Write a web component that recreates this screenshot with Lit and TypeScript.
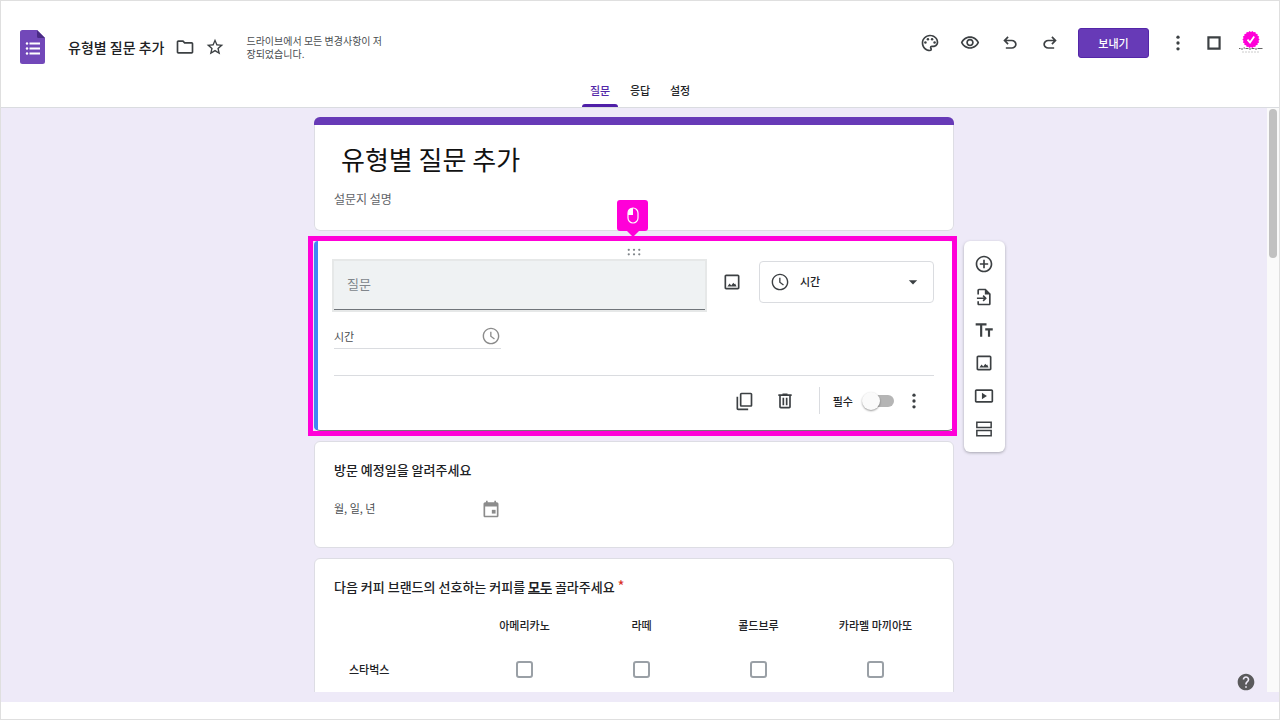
import { LitElement, html, css, svg } from "lit";
import { customElement, property, state } from "lit/decorators.js";

const icons: Record<string, unknown> = {
  folder: svg`<path d="M9.17 6l2 2H20v10H4V6h5.17M10 4H4c-1.1 0-2 .9-2 2v12c0 1.1.9 2 2 2h16c1.1 0 2-.9 2-2V8c0-1.1-.9-2-2-2h-8l-2-2z"/>`,
  star: svg`<path d="M22 9.24l-7.19-.62L12 2 9.19 8.63 2 9.24l5.46 4.73L5.82 21 12 17.27 18.18 21l-1.63-7.03L22 9.24zM12 15.4l-3.76 2.27 1-4.28-3.32-2.88 4.38-.38L12 6.1l1.71 4.04 4.38.38-3.32 2.88 1 4.28L12 15.4z"/>`,
  palette: svg`<path d="M12 22C6.49 22 2 17.51 2 12S6.49 2 12 2s10 4.04 10 9c0 3.31-2.69 6-6 6h-1.77c-.28 0-.5.22-.5.5 0 .12.05.23.13.33.41.47.64 1.06.64 1.67A2.5 2.5 0 0 1 12 22zm0-18c-4.41 0-8 3.59-8 8s3.59 8 8 8c.28 0 .5-.22.5-.5a.54.54 0 0 0-.14-.35c-.41-.46-.63-1.05-.63-1.65a2.5 2.5 0 0 1 2.5-2.5H16c2.21 0 4-1.79 4-4 0-3.86-3.59-7-8-7z"/><circle cx="6.5" cy="11.5" r="1.5"/><circle cx="9.5" cy="7.5" r="1.5"/><circle cx="14.5" cy="7.5" r="1.5"/><circle cx="17.5" cy="11.5" r="1.5"/>`,
  eye: svg`<path d="M12 6c3.79 0 7.17 2.13 8.82 5.5C19.17 14.87 15.79 17 12 17s-7.17-2.13-8.82-5.5C4.83 8.13 8.21 6 12 6m0-2C7 4 2.73 7.11 1 11.5 2.73 15.89 7 19 12 19s9.27-3.11 11-7.5C21.27 7.11 17 4 12 4zm0 5a2.5 2.5 0 0 1 0 5 2.5 2.5 0 0 1 0-5m0-2c-2.48 0-4.5 2.02-4.5 4.5S9.52 16 12 16s4.5-2.02 4.5-4.5S14.48 7 12 7z"/>`,
  undo: svg`<path d="M7 19v-2h7.1c1.05 0 1.96-.33 2.74-1s1.16-1.5 1.16-2.5-.39-1.83-1.16-2.5S15.150 10 14.100 10H7.800l2.600 2.600L9 14 4 9l5-5 1.400 1.400L7.800 8h6.300c1.617 0 3.004.525 4.162 1.575C19.421 10.625 20 11.933 20 13.500s-.579 2.875-1.738 3.925C17.104 18.475 15.717 19 14.100 19H7z"/>`,
  redo: svg`<path transform="matrix(-1 0 0 1 24 0)" d="M7 19v-2h7.1c1.05 0 1.96-.33 2.74-1s1.16-1.5 1.16-2.5-.39-1.83-1.16-2.5S15.150 10 14.100 10H7.800l2.600 2.600L9 14 4 9l5-5 1.400 1.400L7.800 8h6.300c1.617 0 3.004.525 4.162 1.575C19.421 10.625 20 11.933 20 13.500s-.579 2.875-1.738 3.925C17.104 18.475 15.717 19 14.100 19H7z"/>`,
  more: svg`<circle cx="12" cy="5" r="2"/><circle cx="12" cy="12" r="2"/><circle cx="12" cy="19" r="2"/>`,
  square: svg`<path fill-rule="evenodd" d="M4 4h16v16H4zM6.600 6.600v10.800h10.800V6.600z"/>`,
  image: svg`<path d="M19 5v14H5V5h14m0-2H5c-1.100 0-2 .9-2 2v14c0 1.100.9 2 2 2h14c1.100 0 2-.9 2-2V5c0-1.100-.9-2-2-2z"/><path d="M6.500 17.500l2.600-3.600 2 2.400 2.500-3.300 1.300 1.700.8-.8 1.800 3.600z"/>`,
  clock: svg`<path d="M11.990 2C6.470 2 2 6.480 2 12s4.470 10 9.990 10C17.520 22 22 17.520 22 12S17.520 2 11.990 2zM12 20.300c-4.600 0-8.300-3.700-8.300-8.300S7.400 3.700 12 3.700s8.300 3.700 8.300 8.300-3.700 8.300-8.300 8.300z"/><path d="M12.600 7H11v5.700l4.700 3.600.95-1.300-4.050-3.050z"/>`,
  caret: svg`<path d="M7 10l5 5 5-5z"/>`,
  copy: svg`<path d="M20 2H9c-1.100 0-2 .9-2 2v13c0 1.100.9 2 2 2h11c1.100 0 2-.9 2-2V4c0-1.100-.9-2-2-2zm0 15H9V4h11v13zM3 7v14c0 1.100.9 2 2 2h12v-2H5V7H3z"/>`,
  trash: svg`<path d="M15 4V3H9v1H4v2h1v13c0 1.100.9 2 2 2h10c1.100 0 2-.9 2-2V6h1V4h-5zm2 15H7V6h10v13z"/><path d="M9 8h2v9H9zM13 8h2v9h-2z"/>`,
  calendar: svg`<path d="M19 4h-1V2h-2v2H8V2H6v2H5c-1.110 0-2 .9-2 2v14c0 1.100.89 2 2 2h14c1.100 0 2-.9 2-2V6c0-1.100-.9-2-2-2zm0 16H5V9h14v11z"/><path d="M13 13h4.500v4.500H13z"/>`,
  add: svg`<path d="M13 7h-2v4H7v2h4v4h2v-4h4v-2h-4V7zm-1-5C6.480 2 2 6.480 2 12s4.480 10 10 10 10-4.480 10-10S17.520 2 12 2zm0 18c-4.410 0-8-3.590-8-8s3.590-8 8-8 8 3.590 8 8-3.590 8-8 8z"/>`,
  importFile: svg`<path fill-rule="evenodd" d="M14 2H6c-1.100 0-2 .9-2 2v5h2V4h7v5h5v11H6v-3H4v3c0 1.100.9 2 2 2h12c1.100 0 2-.9 2-2V8l-6-6z"/><path d="M11.600 9.700l-1.300 1.300 1.400 1.500H3.500v2h8.200l-1.400 1.500 1.300 1.300 3.800-3.800z"/>`,
  title: svg`<path d="M2 4v2.500h5.300V20h2.600V6.500H15V4H2zm20.500 6h-9v2.500h3.200V20h2.600v-7.500h3.200V10z"/>`,
  video: svg`<path d="M9.500 8v8l6-4-6-4z"/><path d="M21 4H3c-1.100 0-2 .9-2 2v12c0 1.100.9 2 2 2h18c1.100 0 2-.9 2-2V6c0-1.100-.9-2-2-2zm0 14H3V6h18v12z"/>`,
  section: svg`<path fill-rule="evenodd" d="M2.500 3h19v8h-19zM4.300 4.800v4.400h15.400V4.800zM2.500 13h19v8h-19zM4.300 14.800v4.400h15.400v-4.400z"/>`,
  drag: svg`<circle cx="5" cy="9" r="1.500"/><circle cx="12" cy="9" r="1.500"/><circle cx="19" cy="9" r="1.500"/><circle cx="5" cy="15" r="1.500"/><circle cx="12" cy="15" r="1.500"/><circle cx="19" cy="15" r="1.500"/>`,
  help: svg`<path d="M12 2C6.480 2 2 6.480 2 12s4.480 10 10 10 10-4.480 10-10S17.520 2 12 2zm1 17h-2v-2h2v2zm2.070-7.750l-.9.920C13.450 12.900 13 13.500 13 15h-2v-.5c0-1.100.45-2.100 1.170-2.830l1.240-1.260c.37-.36.59-.86.59-1.410 0-1.100-.9-2-2-2s-2 .9-2 2H8c0-2.210 1.790-4 4-4s4 1.790 4 4c0 .88-.36 1.680-.93 2.250z"/>`,
};

@customElement("gf-icon")
class GfIcon extends LitElement {
  static styles = css`
    :host { display: inline-flex; flex: none; width: 20px; height: 20px; }
    svg { width: 100%; height: 100%; fill: currentColor; }
  `;
  @property() name = "";
  render() {
    return html`<svg viewBox="0 0 24 24" aria-hidden="true">${icons[this.name]}</svg>`;
  }
}

@customElement("app-root")
class AppRoot extends LitElement {
  static styles = css`
    :host {
      display: flex; flex-direction: column; position: relative;
      box-sizing: border-box; height: 100vh; padding-bottom: 17px;
      border: 1px solid #dfdfdf; background: #fff; color: #202124;
      font-family: "Noto Sans CJK KR", "Noto Sans", sans-serif;
      font-size: 12px; line-height: 20px;
    }
    * { box-sizing: border-box; }
    button, input, select { font: inherit; color: inherit; margin: 0; }
    h1, h2, p { margin: 0; font-weight: 400; }
    .icon-btn {
      display: inline-flex; align-items: center; justify-content: center; flex: none;
      min-width: 20px; height: 20px; padding: 0; border: 0; background: none;
      color: #3c4043; cursor: pointer;
    }

    .header { flex: none; border-bottom: 1px solid #dadce0; }
    .bar { display: flex; justify-content: space-between; align-items: flex-start; padding: 27px 15px 0 19px; }
    .file { display: flex; align-items: center; padding-top: 2px; }
    .logo { width: 25px; height: 34px; flex: none; }
    .file-name { margin: 0 11px 0 23px; padding-bottom: 1px; font-size: 14px; font-weight: 500; white-space: nowrap; }
    .file-actions { display: flex; gap: 10px; }
    .saved { width: 136px; margin-left: 21px; font-size: 10px; line-height: 13px; color: #4a4d51; }
    .actions { display: flex; align-items: center; height: 30px; }
    .tools { display: flex; gap: 8px; margin-right: 12px; }
    .tools .icon-btn { width: 32px; }
    .account { display: flex; align-items: center; gap: 12px; margin-left: 17px; }
    .account .icon-btn { width: 24px; }
    .send {
      height: 30px; padding: 0 19px 1px; min-width: 71px; border: 1px solid #5326a8; border-radius: 3px;
      background: #673ab7; color: #fff; font-size: 11px; font-weight: 500; line-height: 20px;
    }
    .avatar { width: 26px; height: 26px; flex: none; }
    .tabs { display: flex; justify-content: center; gap: 4px; margin-top: 12px; }
    .tab {
      display: flex; align-items: center; width: 36px; height: 31px; padding: 0 0 3px; justify-content: center;
      border: 0; background: none; font-size: 11px; font-weight: 500; line-height: 20px; position: relative;
    }
    .tab.active { color: #5227a8; }
    .tab.active::after {
      content: ""; position: absolute; left: 0; right: 0; bottom: 0; height: 3px;
      border-radius: 3px 3px 0 0; background: #4f1fa8;
    }

    .workspace { flex: 1; min-height: 0; display: flex; background: #eeeaf8; border-bottom: 10px solid #eeeaf8; }
    .scroller { flex: 1; min-width: 0; overflow: hidden auto; scrollbar-width: none; padding-top: 9px; }
    .track { flex: none; width: 12px; padding: 1px 2px; background: #fafafa; }
    .thumb { height: 149px; border-radius: 4px; background: #c1c1c1; }
    .form { display: flex; flex-direction: column; gap: 10px; max-width: 640px; margin: 0 auto; }
    .card { position: relative; padding: 18px 19px; border: 1px solid #dddde4; border-radius: 6px; background: #fff; }

    .intro { padding: 0 19px 22px; border: 0; box-shadow: inset 0 0 0 1px #dddde4; overflow: hidden; }
    .intro::before { content: ""; display: block; height: 8px; margin: 0 -19px 14px; background: #673ab7; }
    .intro h1 { padding: 0 8px; font-size: 26px; line-height: 40px; color: #111; }
    .intro p { margin-top: 9px; padding-left: 1px; line-height: 21px; color: #5f6368; }

    .editor { padding: 0 20px 16px; border: 0; border-bottom: 1px solid #777; }
    .editor::before {
      content: ""; position: absolute; left: 0; top: 0; bottom: 0; width: 4px;
      border-radius: 6px 0 0 6px; background: #4285f4;
    }
    .drag { display: flex; justify-content: center; height: 20px; align-items: center; padding-top: 2px; color: #80868b; }
    .drag gf-icon { width: 18px; height: 18px; }
    .ask { display: flex; align-items: flex-start; gap: 17px; }
    .question {
      flex: 1; min-width: 0; height: 49px; padding: 0 13px 3px; border: 0; border-bottom: 1px solid #70757a; border-radius: 0;
      background: #eff2f3; box-shadow: 0 0 0 2px #e6e8e8; font-size: 13px;
    }
    .question::placeholder { color: #80868b; opacity: 1; }
    .ask .icon-btn { margin-top: 11px; }
    .kind {
      position: relative; display: flex; align-items: center; width: 175px; height: 42px; padding-left: 10px;
      border: 1px solid #dadce0; border-radius: 4px; color: #3c4043;
    }
    .kind select {
      position: absolute; inset: 0; width: 100%; height: 100%; padding: 0 30px 2px 40px; border: 0;
      background: none; appearance: none; color: #202124; font-weight: 500; font-size: 11px;
    }
    .kind .caret { margin-left: auto; margin-right: 10px; }
    .answer { display: flex; align-items: center; width: 167px; color: #4a4d51; font-size: 11px; }
    .answer input { flex: 1; min-width: 0; height: 20px; padding: 0 0 1px; border: 0; background: none; }
    .answer input::placeholder { color: #4a4d51; opacity: 1; }
    .answer gf-icon { color: #8c8c8c; }
    .time { height: 25px; margin-top: 14px; border-bottom: 1px solid #dadce0; }
    .footer { display: flex; align-items: center; justify-content: flex-end; margin-top: 26px; padding: 11px 10px 0 0; border-top: 1px solid #dadce0; }
    .pair { display: flex; gap: 21px; }
    .rule { width: 1px; height: 27px; margin: 0 13px 0 24px; background: #dadce0; }
    .required { display: flex; align-items: center; gap: 11px; margin-right: 10px; font-size: 11px; font-weight: 500; }
    .switch { appearance: none; position: relative; width: 30px; height: 12px; border-radius: 6px; background: #b5b5b5; }
    .switch::before {
      content: ""; position: absolute; left: -2px; top: -3px; width: 18px; height: 18px; border-radius: 50%;
      background: #fafafa; box-shadow: 0 1px 2px rgba(0, 0, 0, 0.4);
    }
    .switch:checked::before { left: 14px; background: #673ab7; }
    .outline { position: absolute; inset: -5px -3px -6px -6px; border: 5px solid #ff00d8; pointer-events: none; }
    .badge {
      position: absolute; left: 303px; top: -41px; width: 31px; height: 31px; border-radius: 3px; background: #ff00d8;
      display: flex; align-items: center; justify-content: center;
    }
    .badge::after {
      content: ""; position: absolute; top: 100%; left: 50%; margin-left: -6px;
      border: 6px solid transparent; border-top-color: #ff00d8; border-bottom: 0;
    }
    .badge svg { width: 12px; height: 17px; }
    .side {
      position: absolute; left: calc(100% + 10px); top: 0; display: flex; flex-direction: column; gap: 13px;
      padding: 13px 11px 13px 10px; border-radius: 6px; background: #fff; box-shadow: 0 1px 3px rgba(60, 64, 67, 0.4);
    }

    .card h2 { font-size: 13px; font-weight: 500; color: #202124; }
    .card h2 u { font-weight: 700; }
    .date { height: 21px; margin: 18px 0 10px; }
    .star { color: #d93025; font-size: 15px; line-height: 16px; font-weight: 400; }
    .grid { width: 100%; margin-top: 8px; border-collapse: collapse; table-layout: fixed; font-size: 11px; color: #202124; }
    .grid th, .grid td { padding: 0; font-weight: 500; text-align: center; }
    .grid thead th { height: 40px; }
    .grid tbody tr { height: 48px; }
    .grid th:first-child { width: 22%; padding-left: 15px; text-align: left; }
    .grid input {
      display: block; appearance: none; width: 17px; height: 17px; margin: 0 auto;
      border: 2px solid #9aa0a6; border-radius: 3px; background: #fff;
    }
    .grid input:checked { background: #673ab7; border-color: #673ab7; }
    .help { position: absolute; right: 23px; bottom: 27px; color: #5a5a5c; }
  `;

  @state() tab = 0;

  private button(name: string, label: string) {
    return html`<button class="icon-btn" aria-label=${label}><gf-icon name=${name}></gf-icon></button>`;
  }

  render() {
    const drinks = ["아메리카노", "라떼", "콜드브루", "카라멜 마끼아또"];
    const side = [["add", "질문 추가"], ["importFile", "질문 가져오기"], ["title", "제목 및 설명 추가"], ["image", "이미지 추가"], ["video", "동영상 추가"], ["section", "섹션 추가"]];
    const teeth = Array.from({ length: 36 }, (_, i) => {
      const r = i % 2 ? 7.6 : 8.6;
      const a = (i * Math.PI) / 18;
      return `${13 + r * Math.cos(a)},${9.5 + r * Math.sin(a)}`;
    }).join(" ");
    return html`
      <header class="header">
        <div class="bar">
          <div class="file">
            <svg class="logo" viewBox="0 0 25 34" aria-hidden="true">
              <path d="M2.500 0H17l8 8v23.500a2.500 2.500 0 0 1-2.500 2.500h-20A2.500 2.500 0 0 1 0 31.500v-29A2.500 2.500 0 0 1 2.500 0z" fill="#7248b9"/>
              <path d="M17 0l8 8h-6.500A1.500 1.500 0 0 1 17 6.500z" fill="#4a2b85"/>
              <path d="M9.500 12.500H20v2H9.500zM9.500 17.500H20v2H9.500zM9.500 22.500H20v2H9.500z" fill="#fff"/>
              <g fill="#fff"><circle cx="7" cy="13.500" r="1.200"/><circle cx="7" cy="18.500" r="1.200"/><circle cx="7" cy="23.500" r="1.200"/></g>
            </svg>
            <span class="file-name">유형별 질문 추가</span>
            <div class="file-actions">${this.button("folder", "이동")}${this.button("star", "별표")}</div>
            <span class="saved">드라이브에서 모든 변경사항이 저장되었습니다.</span>
          </div>
          <div class="actions">
            <div class="tools">
              ${this.button("palette", "테마")}${this.button("eye", "미리보기")}${this.button("undo", "실행취소")}${this.button("redo", "재실행")}
            </div>
            <button class="send">보내기</button>
            <div class="account">
              ${this.button("more", "더보기")}${this.button("square", "앱")}
              <svg class="avatar" viewBox="0 0 26 26" aria-hidden="true">
                <polygon points=${teeth} fill="#ff00d8"/>
                <path d="M9.500 9.700l2.500 2.800 4.200-6" fill="none" stroke="#fff" stroke-width="1.800"/>
                <path d="M1 18.500h1.500m.5.500h2m.5-1h1.500m.5.500h3m.5.500h2m.5-.5h3m.5.500h2m.5-.5h5" stroke="#666" stroke-width="1.200"/>
                <path d="M4 22h18" stroke="#ccc" stroke-width="1" stroke-dasharray="2 1"/>
              </svg>
            </div>
          </div>
        </div>
        <nav class="tabs">
          ${["질문", "응답", "설정"].map((t, i) => html`<button class="tab ${i === this.tab ? "active" : ""}" @click=${() => (this.tab = i)}>${t}</button>`)}
        </nav>
      </header>

      <div class="workspace">
        <main class="scroller">
          <div class="form">
            <section class="card intro">
              <h1>유형별 질문 추가</h1>
              <p>설문지 설명</p>
            </section>

            <section class="card editor">
              <div class="drag"><gf-icon name="drag"></gf-icon></div>
              <div class="ask">
                <input class="question" placeholder="질문" aria-label="질문">
                ${this.button("image", "이미지 추가")}
                <div class="kind">
                  <gf-icon name="clock"></gf-icon>
                  <gf-icon class="caret" name="caret"></gf-icon>
                  <select aria-label="질문 유형"><option>시간</option></select>
                </div>
              </div>
              <div class="answer time"><input placeholder="시간" aria-label="시간" readonly><gf-icon name="clock"></gf-icon></div>
              <div class="footer">
                <div class="pair">${this.button("copy", "복제")}${this.button("trash", "삭제")}</div>
                <span class="rule"></span>
                <label class="required">필수<input class="switch" type="checkbox" role="switch"></label>
                ${this.button("more", "더보기")}
              </div>
              <div class="outline"></div>
              <div class="badge">
                <svg viewBox="0 0 12 17" aria-hidden="true">
                  <rect x="1" y="1" width="10" height="15" rx="5" fill="none" stroke="#fff" stroke-width="1.200"/>
                  <path d="M6 1v7H1V6a5 5 0 0 1 5-5z" fill="#fff"/>
                </svg>
              </div>
              <div class="side">${side.map(([n, l]) => this.button(n, l))}</div>
            </section>

            <section class="card">
              <h2>방문 예정일을 알려주세요</h2>
              <div class="answer date"><input placeholder="월, 일, 년" aria-label="월, 일, 년" readonly><gf-icon name="calendar"></gf-icon></div>
            </section>

            <section class="card">
              <h2>다음 커피 브랜드의 선호하는 커피를 <u>모두</u> 골라주세요 <span class="star">*</span></h2>
              <table class="grid">
                <thead><tr><th></th>${drinks.map((d) => html`<th scope="col">${d}</th>`)}</tr></thead>
                <tbody><tr><th scope="row">스타벅스</th>${drinks.map((d) => html`<td><input type="checkbox" aria-label="스타벅스 ${d}"></td>`)}</tr></tbody>
              </table>
            </section>
          </div>
        </main>
        <div class="track"><div class="thumb"></div></div>
      </div>
      <button class="icon-btn help" aria-label="도움말"><gf-icon name="help"></gf-icon></button>
    `;
  }
}
